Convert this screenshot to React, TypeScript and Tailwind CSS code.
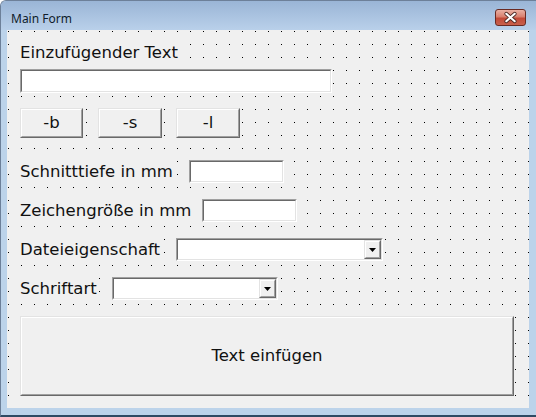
import React from 'react';

// Win7-style VBA UserForm "Main Form" in design mode (dot grid visible)

function Sunken({ className, children }: { className: string; children?: React.ReactNode }) {
  return (
    <div className={`flex border border-t-[#a0a0a0] border-l-[#a0a0a0] border-b-white border-r-white ${className}`}>
      <div className="flex flex-1 border border-t-[#696969] border-l-[#696969] border-b-[#e3e3e3] border-r-[#e3e3e3] bg-white justify-end">
        {children}
      </div>
    </div>
  );
}

function Raised({ className, children }: { className: string; children?: React.ReactNode }) {
  return (
    <div className={`flex border border-t-[#e3e3e3] border-l-[#e3e3e3] border-b-[#696969] border-r-[#696969] ${className}`}>
      <div className="flex flex-1 items-center justify-center border border-t-white border-l-white border-b-[#a0a0a0] border-r-[#a0a0a0] bg-[#f0f0f0]">
        {children}
      </div>
    </div>
  );
}

function Combo({ className }: { className: string }) {
  return (
    <Sunken className={className}>
      <Raised className="w-[17px]">
        <svg width="7" height="4" viewBox="0 0 7 4">
          <polygon points="0,0 7,0 3.5,4" fill="#000" />
        </svg>
      </Raised>
    </Sunken>
  );
}

function Label({ text, className }: { text: string; className: string }) {
  return (
    <div className={`h-[23px] leading-[23px] ${className}`}>
      <span className="inline-block -ml-[2px] px-[2px] bg-[#f0f0f0]">{text}</span>
    </div>
  );
}

export default function App() {
  return (
    <div className="w-[536px] h-[417px] overflow-hidden bg-[#bcd3ea] rounded-tl-[6px] border-t border-l border-[#6d8099] border-b-2 border-b-[#2f4a63] font-['DejaVu_Sans',sans-serif] text-[16.5px] text-[#111]">
      {/* Title bar */}
      <div className="h-[29px] flex justify-between bg-[linear-gradient(#9ab5d6,#b9d0ea)]">
        <div className="pl-[10px] pt-[10px] text-[12px] leading-[16px] font-['Noto_Sans',sans-serif] text-[#0f1c2b]">
          Main Form
        </div>
        <div className="mt-[8px] mr-[10px] w-[31px] h-[17px] rounded-[3px] border border-[#6a2a22] bg-[linear-gradient(#eab0a3_0%,#d9806f_45%,#c24a38_55%,#c8604c_100%)] flex items-center justify-center">
          <svg width="31" height="15" viewBox="0 0 31 15">
            <path d="M11 3.5 L20 11.5 M20 3.5 L11 11.5" stroke="#4b2a26" strokeWidth="4" strokeLinecap="round" />
            <path d="M11 3.5 L20 11.5 M20 3.5 L11 11.5" stroke="#ffffff" strokeWidth="2.2" strokeLinecap="round" />
          </svg>
        </div>
      </div>

      {/* Client area with design grid */}
      <div className="ml-[6px] w-[522px] h-[378px] pl-[13px] flex flex-col bg-[#f0f0f0] bg-[conic-gradient(at_1px_1px,transparent_270deg,#000_0)] bg-size-[13px_13px] bg-position-[1px_1px]">
        <Label text="Einzufügender Text" className="mt-[11px] h-[24px] leading-[24px]" />
        <Sunken className="mt-[4px] w-[312px] h-[24px]" />

        <div className="mt-[15px] flex h-[30px]">
          <Raised className="w-[63px]">-b</Raised>
          <Raised className="ml-[15px] w-[64px]">-s</Raised>
          <Raised className="ml-[14px] w-[64px]">-l</Raised>
        </div>

        <div className="mt-[22px] flex items-center">
          <Label text="Schnitttiefe in mm" className="w-[169px]" />
          <Sunken className="w-[95px] h-[23px]" />
        </div>
        <div className="mt-[16px] flex items-center">
          <Label text="Zeichengröße in mm" className="w-[182px]" />
          <Sunken className="w-[95px] h-[23px]" />
        </div>
        <div className="mt-[16px] flex items-center">
          <Label text="Dateieigenschaft" className="w-[156px]" />
          <Combo className="w-[207px] h-[23px]" />
        </div>
        <div className="mt-[16px] flex items-center">
          <Label text="Schriftart" className="w-[92px]" />
          <Combo className="w-[166px] h-[23px]" />
        </div>

        <Raised className="mt-[16px] w-[494px] h-[80px]">Text einfügen</Raised>
      </div>
    </div>
  );
}
